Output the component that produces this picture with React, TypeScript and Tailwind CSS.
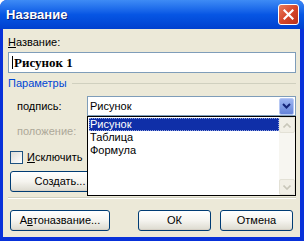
import React from "react";

function XPButton({ children, className = "" }: { children: React.ReactNode; className?: string }) {
  return (
    <div
      className={
        "h-[21px] rounded-[3px] border border-[#003C74] bg-gradient-to-b from-[#FFFFFF] via-[#F5F4EF] to-[#DCDACF] flex items-center justify-center text-[11px] text-black shadow-[inset_0_-1px_0_#D6D0C5] " +
        className
      }
    >
      {children}
    </div>
  );
}

function ScrollArrow({ up }: { up: boolean }) {
  return (
    <div className="w-[16px] h-[16px] rounded-[2px] border border-[#E3E1D6] bg-[#F1EFE6] flex items-center justify-center">
      <svg width="8" height="5" viewBox="0 0 8 5">
        <path
          d={up ? "M0.5 4.5 L4 1 L7.5 4.5" : "M0.5 0.5 L4 4 L7.5 0.5"}
          fill="none"
          stroke="#C9C7BA"
          strokeWidth="1.6"
        />
      </svg>
    </div>
  );
}

export default function App() {
  return (
    <div className="w-[304px] h-[241px] bg-white overflow-hidden font-['Liberation_Sans',Arial,sans-serif]">
      <div className="w-[304px] h-[241px] flex flex-col rounded-t-[7px] overflow-hidden bg-[#0831D9]">
        {/* Title bar */}
        <div className="h-[29px] shrink-0 flex items-center justify-between pl-[6px] pr-[5px] bg-gradient-to-b from-[#3E8BF5] via-[#0756E4] to-[#0040CF]">
          <span className="text-white font-bold text-[13px] leading-[15px] [text-shadow:1px_1px_0_#0A1E6E]">
            Название
          </span>
          <div className="w-[21px] h-[21px] rounded-[3px] border border-white bg-gradient-to-br from-[#E97C5C] via-[#D6462A] to-[#B8311B] flex items-center justify-center">
            <svg width="11" height="11" viewBox="0 0 11 11">
              <path d="M1.5 1.5 L9.5 9.5 M9.5 1.5 L1.5 9.5" stroke="white" strokeWidth="2.2" strokeLinecap="square" />
            </svg>
          </div>
        </div>

        {/* Body frame */}
        <div className="flex-1 flex pl-[3px] pr-[4px] pb-[4px]">
          <div className="relative flex-1 bg-[#ECE9D8] flex flex-col pl-[4px] pr-[4px] text-[11px] text-black">
            {/* Label */}
            <div className="mt-[7px] ml-[1px] h-[13px] leading-[13px]">
              <span className="underline">Н</span>азвание:
            </div>
            {/* Input */}
            <div className="mt-[3px] ml-[1px] h-[21px] border border-[#7F9DB9] bg-white flex items-center pl-[3px]">
              <div className="w-px h-[13px] bg-black mr-[1px]" />
              <span className="font-['Liberation_Serif',serif] font-bold text-[13px] leading-[15px]">Рисунок 1</span>
            </div>
            {/* Group header */}
            <div className="mt-[4px] h-[13px] flex items-center">
              <span className="ml-[1px] text-[#0046D5] leading-[13px]">Параметры</span>
              <div className="flex-1 ml-[5px] h-px bg-[#D0D0BF]" />
            </div>
            {/* Row 1 */}
            <div className="mt-[6px] h-[20px] flex items-center">
              <div className="w-[80px] pl-[10px]">
                по<span className="underline">д</span>пись:
              </div>
              <div className="flex-1 h-[20px] border border-[#7F9DB9] bg-white flex items-center pl-[2px] pr-[1px]">
                <span className="flex-1">Рисунок</span>
                <div className="w-[15px] h-[17px] rounded-[2px] bg-gradient-to-b from-[#9DB5F2] to-[#6483D8] border border-[#B7C8F4] flex items-center justify-center">
                  <svg width="9" height="6" viewBox="0 0 9 6">
                    <path d="M1 1 L4.5 4.5 L8 1" fill="none" stroke="#14257A" strokeWidth="2" />
                  </svg>
                </div>
              </div>
            </div>
            {/* Row 2 */}
            <div className="mt-[5px] h-[20px] flex items-center">
              <div className="w-[80px] pl-[10px] text-[#ACA899]">положение:</div>
              <div className="flex-1 h-[20px] border border-[#C9C7BA] bg-[#F5F4EA]" />
            </div>
            {/* Checkbox */}
            <div className="mt-[10px] h-[13px] flex items-center">
              <div className="ml-[3px] w-[13px] h-[13px] border border-[#1C5180] bg-gradient-to-br from-[#DCDCD7] to-[#FFFFFF]" />
              <div className="ml-[4px] whitespace-nowrap">
                <span className="underline">И</span>сключить
              </div>
            </div>
            {/* Create button */}
            <XPButton className="mt-[7px] ml-[3px] w-[100px]">
              <span>
                Соз<span className="underline">д</span>ать...
              </span>
            </XPButton>
            {/* Separator */}
            <div className="mt-[5px] ml-[1px] h-[2px] border-t border-[#D0D0BF] border-b border-b-white" />
            {/* Bottom buttons */}
            <div className="mt-[11px] h-[21px] flex">
              <XPButton className="ml-[3px] w-[100px]">
                <span>
                  А<span className="underline">в</span>тоназвание...
                </span>
              </XPButton>
              <XPButton className="ml-auto w-[73px]">ОК</XPButton>
              <XPButton className="ml-[9px] mr-[3px] w-[73px]">Отмена</XPButton>
            </div>

            {/* Dropdown list popup */}
            <div className="absolute left-[84px] top-[87px] w-[209px] h-[80px] border border-black bg-white flex">
              <div className="flex-1 flex flex-col pt-px pl-px">
                <div className="h-[13px] leading-[13px] bg-[#0F2FA8] text-white pl-px outline outline-1 outline-dotted outline-[#8FA2E0] -outline-offset-1">
                  Рисунок
                </div>
                <div className="h-[13px] leading-[13px] pl-px">Таблица</div>
                <div className="h-[13px] leading-[13px] pl-px">Формула</div>
              </div>
              <div className="w-[16px] flex flex-col justify-between bg-[#F7F6F1]">
                <ScrollArrow up={true} />
                <ScrollArrow up={false} />
              </div>
            </div>
          </div>
        </div>
      </div>
    </div>
  );
}
